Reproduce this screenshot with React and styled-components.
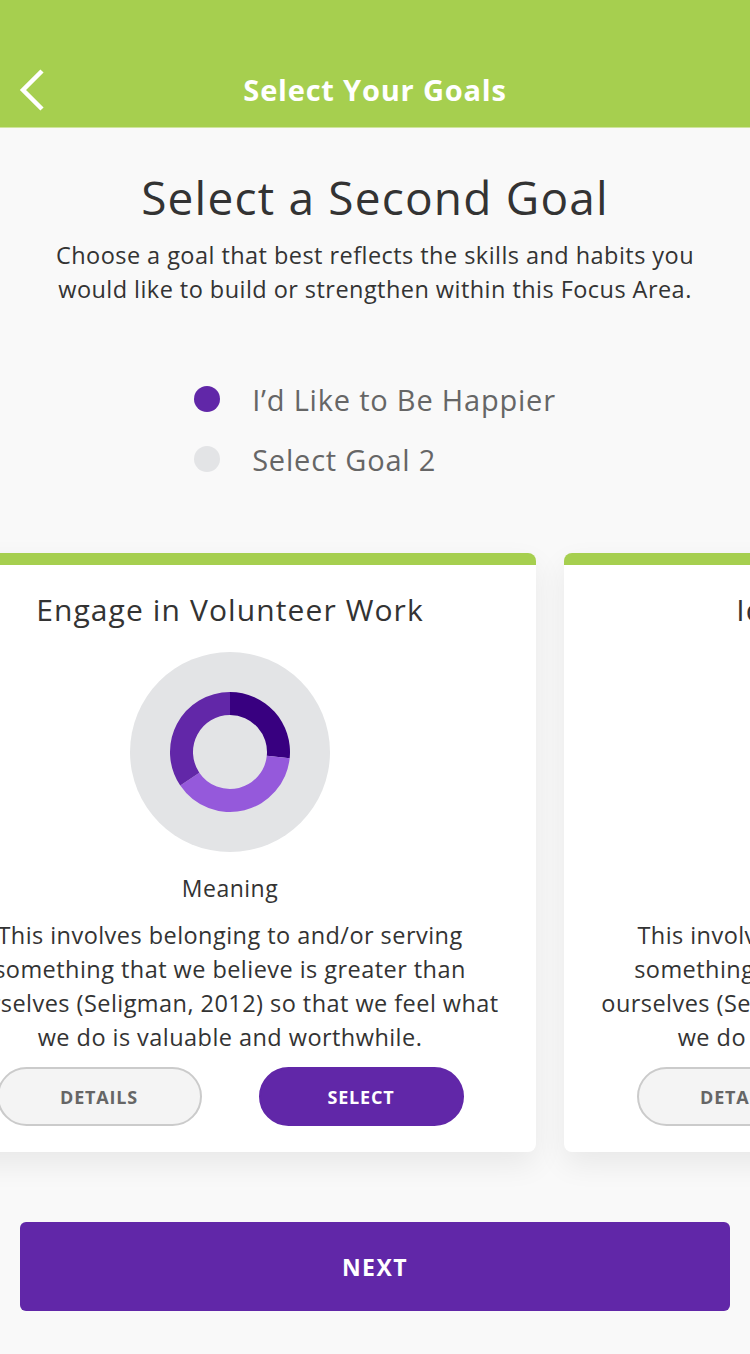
import React from 'react';
import styled, { createGlobalStyle } from 'styled-components';

const GlobalStyle = createGlobalStyle`
  body {
    margin: 0;
    background-color: #f9f9f9;
    font-family: 'Open Sans', 'Noto Sans', sans-serif;
    color: #333;
  }
`;

const Page = styled.div`
  min-height: 1354px;
  background-color: #f9f9f9;
  overflow: hidden;
`;

const Header = styled.header`
  display: grid;
  grid-template-columns: 70px 1fr 70px;
  align-items: center;
  height: 128px;
  padding-top: 52px;
  box-sizing: border-box;
  background-color: #a6cf4f;
  border-bottom: 1px solid #cfe59d;

  h1 {
    margin: 0;
    grid-column: 2;
    text-align: center;
    font-size: 29px;
    font-weight: 700;
    letter-spacing: 0.8px;
    color: white;
  }
`;

const BackButton = styled.button`
  grid-column: 1;
  grid-row: 1;
  display: flex;
  align-items: center;
  padding: 0 0 0 16px;
  border: none;
  background: transparent;
  cursor: pointer;
`;

const Intro = styled.section`
  text-align: center;
  padding: 43px 10px 0;

  h2 {
    margin: 0;
    font-size: 46px;
    line-height: 52px;
    font-weight: 400;
    letter-spacing: 1.2px;
    color: #333;
  }

  p {
    margin: 15px 0 0;
    font-size: 23.5px;
    line-height: 34px;
    letter-spacing: 0.45px;
    color: #333;
  }
`;

const GoalList = styled.ul`
  display: flex;
  flex-direction: column;
  width: fit-content;
  margin: 63px auto 0;
  padding: 0;
  list-style: none;
`;

const GoalItem = styled.li`
  display: flex;
  align-items: center;
  gap: 32px;
  height: 60px;
  font-size: 29px;
  letter-spacing: 0.8px;
  color: #666;

  &::before {
    content: '';
    width: 26px;
    height: 26px;
    border-radius: 50%;
    background-color: ${({ active }) => (active ? '#6127a8' : '#e3e4e6')};
  }
`;

const Carousel = styled.div`
  display: flex;
  gap: 28px;
  margin: 64px 0 0 -76px;
  padding-bottom: 30px;
`;

const Card = styled.article`
  flex: 0 0 612px;
  display: flex;
  flex-direction: column;
  align-items: center;
  height: 599px;
  box-sizing: border-box;
  padding: 27px 10px 26px;
  background-color: white;
  border-top: 12px solid #a6cf4f;
  border-radius: 8px;
  box-shadow: 0 12px 30px rgba(0, 0, 0, 0.07);
  text-align: center;

  h3 {
    margin: 0;
    font-size: 30px;
    line-height: 36px;
    font-weight: 400;
    letter-spacing: 1.1px;
    color: #333;
    white-space: nowrap;
  }

  h4 {
    margin: 21px 0 0;
    font-size: 23px;
    line-height: 30px;
    font-weight: 400;
    letter-spacing: 0.5px;
    color: #333;
  }

  p {
    margin: 15px 0 0;
    font-size: 23.5px;
    line-height: 34px;
    letter-spacing: 0.45px;
    color: #333;
    white-space: nowrap;
  }
`;

const Chart = styled.svg`
  display: block;
  margin-top: 24px;
`;

const Actions = styled.div`
  display: flex;
  gap: 57px;
  margin-top: 13px;
`;

const PillButton = styled.button`
  width: 205px;
  height: 59px;
  border-radius: 30px;
  border: 2px solid ${({ primary }) => (primary ? '#6127a8' : '#cbcbcb')};
  background-color: ${({ primary }) => (primary ? '#6127a8' : '#f4f4f4')};
  color: ${({ primary }) => (primary ? 'white' : '#666')};
  font-family: 'Open Sans', sans-serif;
  font-size: 18px;
  font-weight: 700;
  letter-spacing: 0.8px;
  cursor: pointer;
`;

const NextButton = styled.button`
  display: block;
  width: calc(100% - 40px);
  height: 89px;
  margin: 40px 20px 0;
  border: none;
  border-radius: 6px;
  background-color: #6127a8;
  color: white;
  font-family: 'Open Sans', sans-serif;
  font-size: 23px;
  font-weight: 700;
  letter-spacing: 1.5px;
  cursor: pointer;
`;

const point = (r, a) => {
  const rad = (a * Math.PI) / 180;
  return `${100 + r * Math.sin(rad)} ${100 - r * Math.cos(rad)}`;
};

const segment = (a0, a1, ro = 60, ri = 37) => {
  const large = a1 - a0 > 180 ? 1 : 0;
  return `M ${point(ro, a0)} A ${ro} ${ro} 0 ${large} 1 ${point(ro, a1)} L ${point(ri, a1)} A ${ri} ${ri} 0 ${large} 0 ${point(ri, a0)} Z`;
};

const slices = [
  { from: 0, to: 96, color: '#380080' },
  { from: 96, to: 236, color: '#9559db' },
  { from: 236, to: 360, color: '#6227a8' },
];

const Donut = () => (
  <Chart width="200" height="200" viewBox="0 0 200 200">
    <circle cx="100" cy="100" r="100" fill="#e3e4e6" />
    {slices.map((s) => (
      <path key={s.from} d={segment(s.from, s.to)} fill={s.color} />
    ))}
  </Chart>
);

const cards = [
  { title: 'Engage in Volunteer Work', label: 'Meaning' },
  { title: 'Identify Strengths', label: 'Meaning' },
];

export default function App() {
  return (
    <Page>
      <GlobalStyle />
      <Header>
        <BackButton aria-label="back">
          <svg width="30" height="44" viewBox="0 0 30 44">
            <path d="M26 3 L7 22 L26 41" fill="none" stroke="white" strokeWidth="4.5" />
          </svg>
        </BackButton>
        <h1>Select Your Goals</h1>
      </Header>

      <Intro>
        <h2>Select a Second Goal</h2>
        <p>
          Choose a goal that best reflects the skills and habits you
          <br />
          would like to build or strengthen within this Focus Area.
        </p>
      </Intro>

      <GoalList>
        <GoalItem active>I’d Like to Be Happier</GoalItem>
        <GoalItem>Select Goal 2</GoalItem>
      </GoalList>

      <Carousel>
        {cards.map((card) => (
          <Card key={card.title}>
            <h3>{card.title}</h3>
            <Donut />
            <h4>{card.label}</h4>
            <p>
              This involves belonging to and/or serving
              <br />
              something that we believe is greater than
              <br />
              ourselves (Seligman, 2012) so that we feel what
              <br />
              we do is valuable and worthwhile.
            </p>
            <Actions>
              <PillButton>DETAILS</PillButton>
              <PillButton primary>SELECT</PillButton>
            </Actions>
          </Card>
        ))}
      </Carousel>

      <NextButton>NEXT</NextButton>
    </Page>
  );
}
